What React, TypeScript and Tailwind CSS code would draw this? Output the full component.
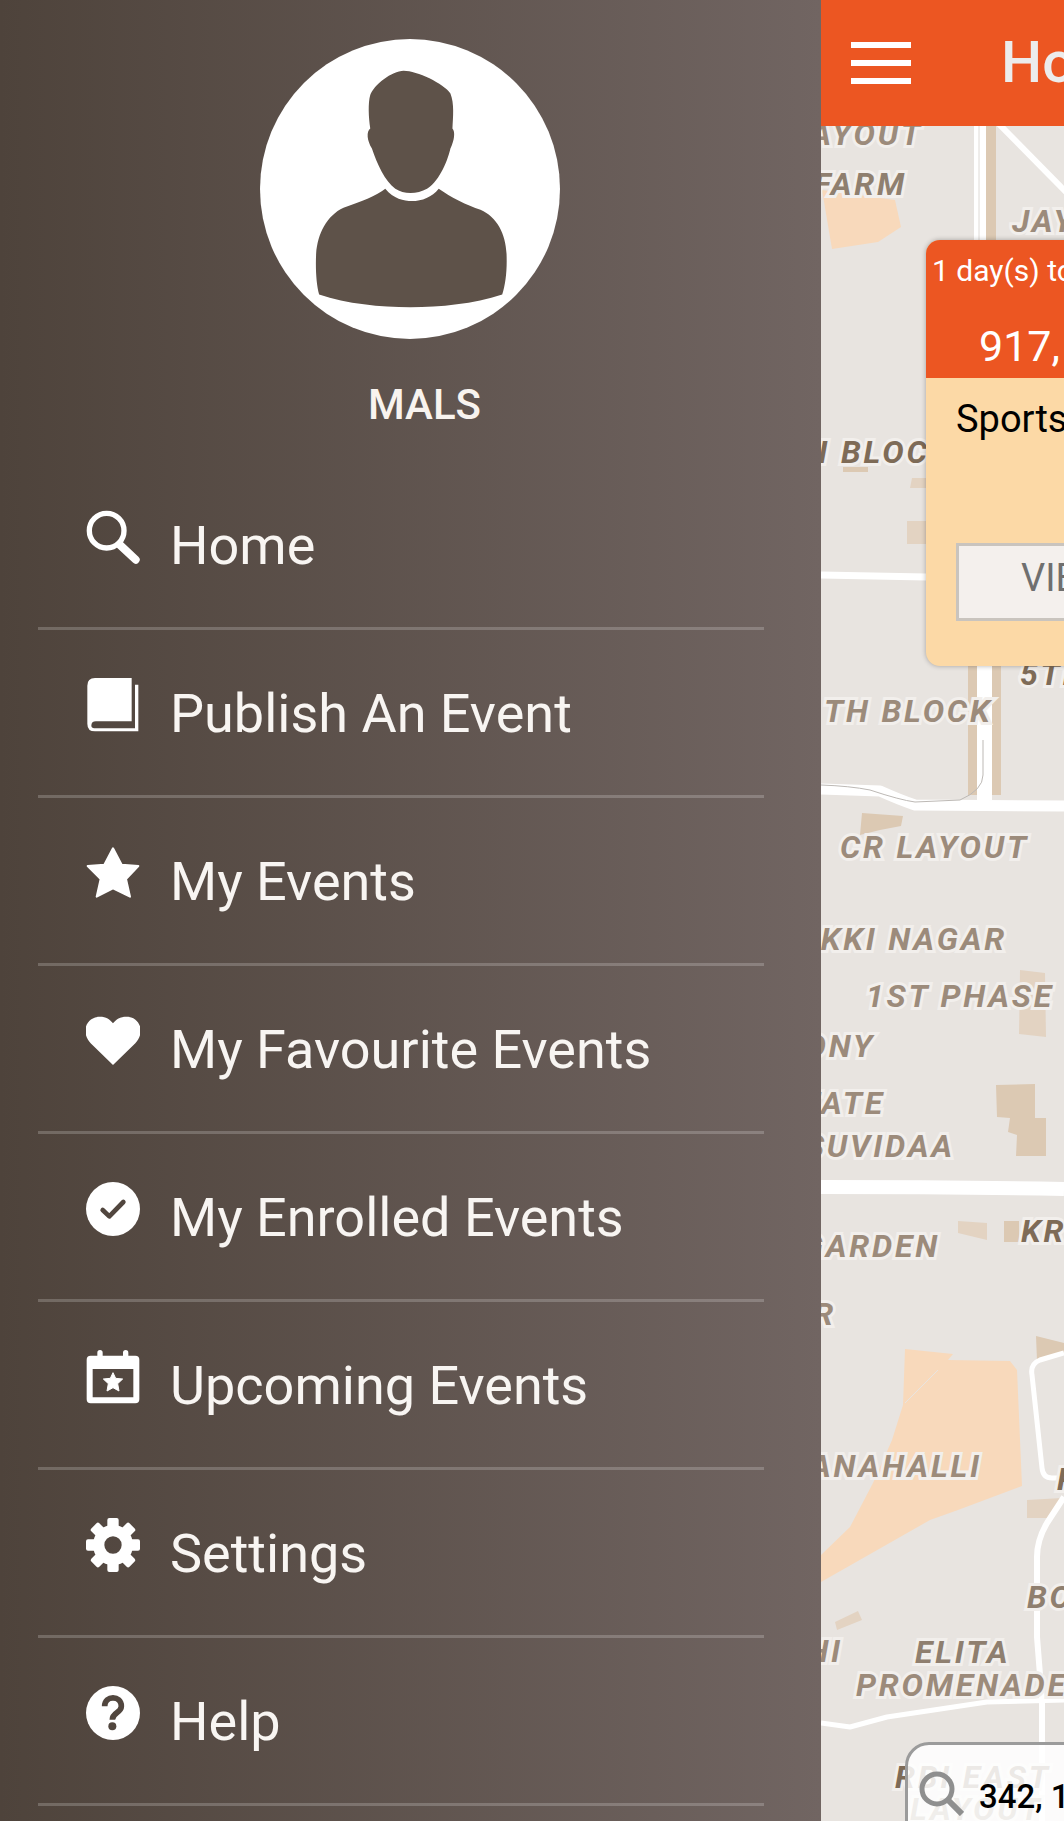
const DARK = '#51463e';

const labels = [
  { t: 'LAYOUT', x: 923, y: 145, a: 'end', f: '#9c8b7b' },
  { t: 'FARM', x: 907, y: 195, a: 'end', f: '#8f7f6f' },
  { t: 'JAY', x: 1012, y: 232, a: 'start', f: '#9c8b7b' },
  { t: 'N', x: 830, y: 463, a: 'end', f: '#7e6b57' },
  { t: 'BLOCK', x: 841, y: 463, a: 'start', f: '#7e6b57' },
  { t: '5TH', x: 1020, y: 685, a: 'start', f: '#7e6b57' },
  { t: 'TH BLOCK', x: 824, y: 722, a: 'start', f: '#9c8b7b' },
  { t: 'CR LAYOUT', x: 840, y: 858, a: 'start', f: '#9c8b7b' },
  { t: 'AKKI NAGAR', x: 1007, y: 950, a: 'end', f: '#9c8b7b' },
  { t: '1ST PHASE', x: 866, y: 1007, a: 'start', f: '#9c8b7b' },
  { t: 'COLONY', x: 875, y: 1057, a: 'end', f: '#9c8b7b' },
  { t: 'ESTATE', x: 885, y: 1114, a: 'end', f: '#9c8b7b' },
  { t: 'SUVIDAA', x: 955, y: 1157, a: 'end', f: '#9c8b7b' },
  { t: 'KR', x: 1021, y: 1242, a: 'start', f: '#7e6b57' },
  { t: 'GARDEN', x: 940, y: 1257, a: 'end', f: '#9c8b7b' },
  { t: 'R', x: 836, y: 1325, a: 'end', f: '#9c8b7b' },
  { t: 'HANAHALLI', x: 982, y: 1477, a: 'end', f: '#9c8b7b' },
  { t: 'P', x: 1057, y: 1490, a: 'start', f: '#7e6b57' },
  { t: 'BO', x: 1027, y: 1608, a: 'start', f: '#8f7f6f' },
  { t: 'HI', x: 843, y: 1662, a: 'end', f: '#9c8b7b' },
  { t: 'ELITA', x: 915, y: 1663, a: 'start', f: '#8f7f6f' },
  { t: 'PROMENADE', x: 856, y: 1696, a: 'start', f: '#9c8b7b' },
  { t: 'RBI EAST', x: 895, y: 1788, a: 'start', f: '#7e6b57' },
  { t: 'LAYOUT', x: 910, y: 1820, a: 'start', f: '#9c8b7b' },
];

const blocks = [
  { p: '822,190 895,200 901,227 878,242 832,249', f: '#f8d9bb' },
  { p: '843,467 868,467 868,472 843,472', f: '#dcc9b3' },
  { p: '912,478 926,478 926,488 910,488', f: '#e3d3c2' },
  { p: '907,521 926,521 926,544 907,544', f: '#e3d3c2' },
  { p: '862,813 903,816 901,826 880,830 860,835', f: '#dcc9b3' },
  { p: '1020,970 1045,973 1046,1037 1019,1034', f: '#e3d3c2' },
  { p: '996,1085 1035,1084 1035,1118 1046,1118 1046,1156 1016,1156 1017,1135 1008,1132 1010,1118 997,1117', f: '#dcc9b3' },
  { p: '958,1221 987,1223 987,1240 958,1233', f: '#e3d3c2' },
  { p: '1004,1221 1019,1221 1019,1242 1004,1242', f: '#dcc9b3' },
  { p: '905,1349 953,1354 948,1360 1010,1361 1017,1370 1022,1486 958,1510 930,1520 821,1582 821,1555 850,1527 873,1483 892,1440 903,1405', f: '#f8d9bb' },
  { p: '1036,1336 1064,1343 1064,1353 1037,1361', f: '#dcc9b3' },
  { p: '1027,1500 1062,1498 1047,1518 1027,1518', f: '#e3d3c2' },
  { p: '835,1622 858,1611 862,1620 837,1630', f: '#e3d3c2' },
];

const MapLayer = () => (
  <svg className="absolute inset-0 h-full w-full" viewBox="821 126 243 1695">
    <rect x="821" y="126" width="243" height="1695" fill="#e8e4e0" />
    {blocks.map((b) => (
      <polygon key={b.p} points={b.p} fill={b.f} />
    ))}
    <rect x="986" y="126" width="10" height="120" fill="#dcc9b3" />
    <rect x="968" y="660" width="10" height="135" fill="#dcc9b3" />
    <rect x="992" y="660" width="9" height="135" fill="#dcc9b3" />
    <g fill="none" stroke="#ffffff" strokeLinejoin="round">
      <path d="M980 126V245" strokeWidth="12" />
      <path d="M997 122L1070 196" strokeWidth="6" />
      <path d="M821 575L926 577" strokeWidth="7" />
      <path d="M984.5 660V800" strokeWidth="15" />
      <path d="M821 789L880 791Q900 800 915 805L1064 806" strokeWidth="11" />
      <path d="M821 1187Q950 1187 1064 1189" strokeWidth="14" />
      <path d="M1064 1353L1040 1360Q1030 1364 1032 1375L1042 1468Q1043 1478 1052 1478H1064" strokeWidth="5" />
      <path d="M1064 1497L1047 1523Q1037 1540 1037 1557V1637L1042 1700V1821" strokeWidth="6" />
      <path d="M821 1723L850 1727L887 1717L987 1702L1064 1700" strokeWidth="5" />
    </g>
    <path d="M979 126V245" fill="none" stroke="#dedad6" strokeWidth="1" />
    <path d="M983 740V775Q983 790 960 800L915 802Q900 800 870 790Q850 786 821 785" fill="none" stroke="#bdb9b5" strokeWidth="1" />
    <path d="M905 1403L938 1370" fill="none" stroke="#e8e4e0" strokeWidth="1" />
    {labels.map((l) => (
      <text
        key={l.t + l.y}
        x={l.x}
        y={l.y}
        textAnchor={l.a as 'start' | 'end'}
        fill={l.f}
        stroke="#f2efec"
        strokeWidth="6"
        paintOrder="stroke"
        className="font-['Roboto'] text-[32px] font-bold italic tracking-[2.8px]"
      >
        {l.t}
      </text>
    ))}
  </svg>
);

const Icon = ({ box, children }: { box: string; children: React.ReactNode }) => (
  <svg className="h-[54px] w-[54px] shrink-0" viewBox={box}>
    {children}
  </svg>
);

const menu = [
  {
    label: 'Home',
    icon: (
      <Icon box="48 60 162 162">
        <circle cx="110" cy="122" r="52" fill="none" stroke="#fff" strokeWidth="16" />
        <path d="M150 165L197 209" stroke="#fff" strokeWidth="24" strokeLinecap="round" />
      </Icon>
    ),
  },
  {
    label: 'Publish An Event',
    icon: (
      <Icon box="48 565 162 162">
        <path
          d="M75 565H185V695H78Q64 695 64 708Q64 716 78 716H195V585H205V725H75Q52 725 52 702V588Q52 565 75 565Z"
          fill="#fff"
        />
      </Icon>
    ),
  },
  {
    label: 'My Events',
    icon: (
      <Icon box="48 50 162 162">
        <polygon
          points="129,57 155,106 205,110 168,149 180,202 129,177 80,202 92,149 53,110 103,106"
          fill="#fff"
          stroke="#fff"
          strokeWidth="6"
          strokeLinejoin="round"
        />
      </Icon>
    ),
  },
  {
    label: 'My Favourite Events',
    icon: (
      <Icon box="48 552 162 162">
        <path
          d="M129 705L62 640C30 605 50 560 90 560C108 560 120 568 129 580C138 568 150 560 170 560C208 560 228 605 196 640Z"
          fill="#fff"
        />
      </Icon>
    ),
  },
  {
    label: 'My Enrolled Events',
    icon: (
      <Icon box="48 1056 162 162">
        <circle cx="129" cy="1137" r="81" fill="#fff" />
        <path
          d="M98 1140L118 1159L160 1116"
          fill="none"
          stroke={DARK}
          strokeWidth="14"
          strokeLinecap="round"
          strokeLinejoin="round"
        />
      </Icon>
    ),
  },
  {
    label: 'Upcoming Events',
    icon: (
      <Icon box="48 30 162 162">
        <path
          fillRule="evenodd"
          d="M62 47H82V38Q82 30 90 30Q98 30 98 38V47H159V38Q159 30 167 30Q175 30 175 38V47H196Q208 47 208 59V178Q208 190 196 190H62Q50 190 50 178V59Q50 47 62 47ZM68 87V172H190V87Z"
          fill="#fff"
        />
        <polygon
          points="129,98 137,115 158,117 143,131 147,153 129,143 111,153 115,131 100,117 121,115"
          fill="#fff"
          stroke="#fff"
          strokeWidth="3"
          strokeLinejoin="round"
        />
      </Icon>
    ),
  },
  {
    label: 'Settings',
    icon: (
      <Icon box="48 534 162 162">
        <circle cx="129" cy="615" r="43" fill="none" stroke="#fff" strokeWidth="34" />
        {[0, 45, 90, 135, 180, 225, 270, 315].map((a) => (
          <rect key={a} x="112" y="534" width="34" height="30" rx="6" fill="#fff" transform={`rotate(${a} 129 615)`} />
        ))}
      </Icon>
    ),
  },
  {
    label: 'Help',
    icon: (
      <Icon box="48 1037 162 162">
        <circle cx="129" cy="1118" r="81" fill="#fff" />
        <path
          d="M104 1098C104 1064 154 1064 154 1098C154 1118 127 1116 127 1138"
          fill="none"
          stroke={DARK}
          strokeWidth="17"
        />
        <circle cx="127" cy="1158" r="12" fill={DARK} />
      </Icon>
    ),
  },
];

export default function App() {
  return (
    <div className="flex h-[1821px] w-[1064px] overflow-hidden font-['Roboto',sans-serif]">
      {/* Drawer */}
      <aside className="flex h-full w-[821px] shrink-0 flex-col overflow-hidden bg-[linear-gradient(to_right,#4e433b,#716562)] pt-[39px]">
        <div className="ml-[260px] flex h-[300px] w-[300px] items-center justify-center rounded-full bg-white">
          <svg className="h-[300px] w-[300px]" viewBox="60 57 898 898">
            <path
              fill="#5e5249"
              d="M490 152C530 152 610 190 630 220C642 250 638 290 636 325C645 335 642 360 630 385C620 430 590 490 560 505C530 522 490 522 465 505C435 485 410 430 395 385C380 360 378 335 390 325C385 290 383 250 390 225C400 195 455 152 490 152Z"
            />
            <path
              fill="#5e5249"
              d="M435 505C460 535 490 542 515 542C545 542 575 530 595 505C630 530 680 555 720 568C770 590 795 640 798 700C800 750 795 790 785 822C700 850 600 860 510 860C420 860 320 850 237 822C228 790 226 740 228 700C232 640 260 585 310 562C360 545 410 525 435 505Z"
            />
          </svg>
        </div>
        <div className="mt-[42px] pl-[28px] text-center text-[42px] font-medium leading-[48px] text-[#f8f3ef]">MALS</div>
        <nav className="ml-[38px] mt-[33px] flex w-[726px] flex-col">
          {menu.map((item) => (
            <div
              key={item.label}
              className="flex h-[168px] shrink-0 items-start gap-[30px] border-b-[3px] border-[#ffffff33] pl-[48px] pt-[48px]"
            >
              {item.icon}
              <span className="mt-[5px] text-[54px] leading-[61px] text-[#f8f5f2]">{item.label}</span>
            </div>
          ))}
        </nav>
      </aside>

      {/* Home screen behind the drawer */}
      <main className="flex h-full min-w-0 flex-1 flex-col">
        <header className="flex h-[126px] shrink-0 items-start overflow-hidden bg-[#ec5622] pl-[30px] pt-[42px]">
          <div className="flex w-[60px] shrink-0 flex-col gap-[12px]">
            <div className="h-[6px] bg-white" />
            <div className="h-[6px] bg-white" />
            <div className="h-[6px] bg-white" />
          </div>
          <span className="ml-[90px] mt-[-14px] text-[58px] font-medium leading-[68px] text-[#ececec]">Home</span>
        </header>
        <div className="relative min-h-0 flex-1 overflow-hidden">
          <MapLayer />

          <div className="absolute left-[105px] top-[114px] h-[426px] w-[300px] overflow-hidden rounded-[14px] bg-[#fcd9a6] shadow-[0_0_5px_rgba(0,0,0,0.3)]">
            <div className="h-[138px] whitespace-nowrap bg-[#ec5622] pl-[6px] pt-[13px] text-white">
              <div className="text-[30px] leading-[36px]">1 day(s) to go</div>
              <div className="mt-[32px] pl-[47px] text-[43px] leading-[50px]">917,</div>
            </div>
            <div className="pl-[30px] pt-[19px]">
              <div className="text-[38px] leading-[45px] text-black">Sports</div>
              <div className="mt-[101px] flex h-[78px] w-[300px] items-center border-[3px] border-[#c9c4be] bg-[#f4f0ed] pb-[8px] pl-[62px] text-[38px] text-[#6f6f6f]">
                VIEW
              </div>
            </div>
          </div>

          <div className="absolute left-[84px] top-[1616px] flex h-[100px] w-[300px] items-start rounded-tl-[24px] border-[3px] border-[#9b9b9b] bg-[#ffffffd9] pl-[10px] pt-[25px]">
            <svg className="h-[46px] w-[46px] shrink-0" viewBox="0 0 46 46">
              <circle cx="19" cy="19" r="15" fill="none" stroke="#8f8f8f" strokeWidth="5" />
              <path d="M30 30L44 44" stroke="#8f8f8f" strokeWidth="6" />
            </svg>
            <span className="ml-[15px] mt-[7px] text-[33px] font-medium leading-[39px] text-black">342, 1</span>
          </div>
        </div>
      </main>
    </div>
  );
}
